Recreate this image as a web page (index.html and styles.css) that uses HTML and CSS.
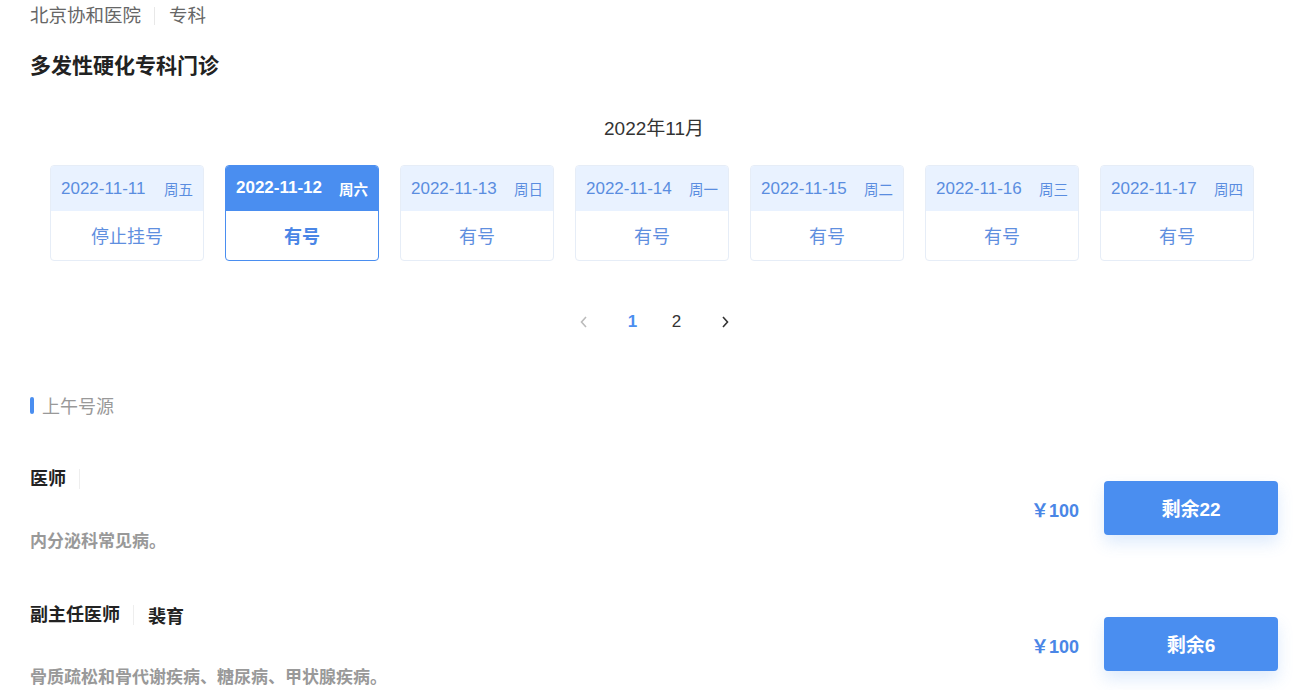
FILE: index.html
```html
<!DOCTYPE html>
<html lang="zh-CN">
<head>
<meta charset="utf-8">
<title>多发性硬化专科门诊</title>
<link rel="stylesheet" href="styles.css">
</head>
<body>
<div class="page">
  <div class="crumbs"><span class="crumb first">北京协和医院</span><span class="crumb">专科</span></div>
  <h1 class="title">多发性硬化专科门诊</h1>
  <div class="month">2022年11月</div>
  <div class="days">
    <div class="day"><div class="day-head"><span class="date">2022-11-11</span><span class="week">周五</span></div><div class="day-body">停止挂号</div></div>
    <div class="day active"><div class="day-head"><span class="date">2022-11-12</span><span class="week">周六</span></div><div class="day-body">有号</div></div>
    <div class="day"><div class="day-head"><span class="date">2022-11-13</span><span class="week">周日</span></div><div class="day-body">有号</div></div>
    <div class="day"><div class="day-head"><span class="date">2022-11-14</span><span class="week">周一</span></div><div class="day-body">有号</div></div>
    <div class="day"><div class="day-head"><span class="date">2022-11-15</span><span class="week">周二</span></div><div class="day-body">有号</div></div>
    <div class="day"><div class="day-head"><span class="date">2022-11-16</span><span class="week">周三</span></div><div class="day-body">有号</div></div>
    <div class="day"><div class="day-head"><span class="date">2022-11-17</span><span class="week">周四</span></div><div class="day-body">有号</div></div>
  </div>
  <div class="pager">
    <span class="pg arrow prev disabled"><svg width="10" height="14" viewBox="0 0 10 14"><path d="M7 2 L2.5 7 L7 12" fill="none" stroke="currentColor" stroke-width="1.6"/></svg></span>
    <span class="pg current">1</span>
    <span class="pg">2</span>
    <span class="pg arrow next"><svg width="10" height="14" viewBox="0 0 10 14"><path d="M3 2 L7.5 7 L3 12" fill="none" stroke="currentColor" stroke-width="1.6"/></svg></span>
  </div>
  <div class="section"><span class="bar"></span><span class="section-title">上午号源</span></div>
  <div class="doc">
    <div class="doc-info">
      <div class="doc-name"><span class="role">医师</span><span class="name"></span></div>
      <div class="doc-desc">内分泌科常见病。</div>
    </div>
    <div class="doc-action">
      <span class="price">￥100</span>
      <button class="book">剩余22</button>
    </div>
  </div>
  <div class="doc second">
    <div class="doc-info">
      <div class="doc-name"><span class="role">副主任医师</span><span class="name">裴育</span></div>
      <div class="doc-desc">骨质疏松和骨代谢疾病、糖尿病、甲状腺疾病。</div>
    </div>
    <div class="doc-action">
      <span class="price">￥100</span>
      <button class="book">剩余6</button>
    </div>
  </div>
</div>
</body>
</html>
```

FILE: styles.css
```css
* { box-sizing: border-box; }
html, body { margin: 0; padding: 0; background: #fff; }
body {
  font-family: "Liberation Sans", "Noto Sans CJK SC", sans-serif;
  color: #333;
  overflow: hidden;
}
.page { padding: 0 20px 0 30px; }

.crumbs { height: 32px; line-height: 32px; font-size: 18.5px; color: #666; display: flex; }
.crumb.first { padding-right: 13px; border-right: 1px solid #e8e8e8; margin-right: 14px; height: 18px; line-height: 18px; align-self: center; }

.title { margin: 19px 0 0; font-size: 21px; line-height: 30px; font-weight: bold; color: #222; }

.month { margin-top: 36px; text-align: center; font-size: 19px; line-height: 24px; color: #333; }

.days { margin-top: 24px; display: flex; justify-content: center; gap: 21px; padding-right: 4px; }
.day { width: 154px; height: 96px; border: 1px solid #e6edf7; border-radius: 4px; overflow: hidden; display: flex; flex-direction: column; }
.day-head { height: 45px; background: #e9f2ff; display: flex; align-items: center; justify-content: space-between; padding: 0 10px 0 10px; color: #5a8de0; }
.date { font-size: 17px; }
.week { font-size: 14.5px; }
.day-body { flex: 1; display: flex; align-items: center; justify-content: center; font-size: 18px; color: #5f8fdf; padding-bottom: 2px; }
.day.active { border-color: #4a8ef0; }
.day.active .day-head { background: #4a8ef0; color: #fff; margin: -1px -1px 0; padding: 0 11px 0 11px; height: 46px; }
.day.active .date, .day.active .week { font-weight: bold; }
.day.active .day-body { font-weight: bold; color: #4a86e6; }

.pager { margin-top: 49px; display: flex; justify-content: center; height: 24px; line-height: 24px; }
.pg { width: 44px; text-align: center; font-size: 17px; color: #333; display: flex; align-items: center; justify-content: center; }
.pg.prev { margin-right: 5px; }
.pg.next { margin-left: 4px; }
.pg.current { color: #4a8ef0; font-weight: bold; }
.pg.arrow { color: #333; }
.pg.arrow.disabled { color: #bbb; }

.section { margin-top: 59px; display: flex; align-items: center; height: 24px; }
.bar { width: 4px; height: 17px; border-radius: 2px; background: #4a8ef0; margin-right: 8px; }
.section-title { font-size: 18px; color: #999; }

.doc { margin-top: 50px; display: flex; align-items: center; justify-content: space-between; }
.doc.second { margin-top: 49px; }
.doc-info { display: flex; flex-direction: column; gap: 39px; }
.doc-name { display: flex; align-items: center; height: 24px; font-size: 18px; font-weight: bold; color: #222; }
.role { padding-right: 13px; border-right: 1px solid #eee; margin-right: 14px; line-height: 20px; }
.doc-desc { height: 24px; line-height: 24px; font-size: 17px; font-weight: bold; color: #999; }
.doc-action { display: flex; align-items: center; gap: 25px; margin-top: -6px; }
.price { font-size: 18px; font-weight: bold; color: #4a86e6; margin-top: 2px; }
.book {
  width: 174px; height: 54px; border: none; border-radius: 4px;
  background: #4a8ef0; color: #fff; font-family: inherit;
  font-size: 19px; font-weight: bold;
  box-shadow: 0 8px 16px rgba(74, 142, 240, 0.18);
}
```
